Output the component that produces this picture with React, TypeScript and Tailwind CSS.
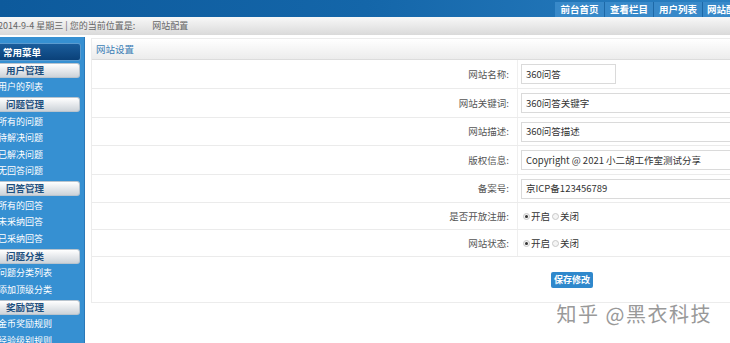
import React from 'react';

const font = { fontFamily: '"Noto Sans CJK SC", "Liberation Sans", sans-serif' };

type Group = { title: string; items: string[] };

const groups: Group[] = [
  { title: '用户管理', items: ['用户的列表'] },
  { title: '问题管理', items: ['所有的问题', '待解决问题', '已解决问题', '无回答问题'] },
  { title: '回答管理', items: ['所有的回答', '未采纳回答', '已采纳回答'] },
  { title: '问题分类', items: ['问题分类列表', '添加顶级分类'] },
  { title: '奖励管理', items: ['金币奖励规则', '经验级别规则'] },
];

const navTabs = ['前台首页', '查看栏目', '用户列表', '网站配置'];

type Field =
  | { label: string; kind: 'text'; value: string; h: string; short?: boolean }
  | { label: string; kind: 'radio'; h: string };

// row heights follow the screenshot's uneven grid
const fields: Field[] = [
  { label: '网站名称:', kind: 'text', value: '360问答', short: true, h: 'h-[29px]' },
  { label: '网站关键词:', kind: 'text', value: '360问答关键字', h: 'h-[29px]' },
  { label: '网站描述:', kind: 'text', value: '360问答描述', h: 'h-[28px]' },
  { label: '版权信息:', kind: 'text', value: 'Copyright @ 2021 小二胡工作室测试分享', h: 'h-[29px]' },
  { label: '备案号:', kind: 'text', value: '京ICP备123456789', h: 'h-[28px]' },
  { label: '是否开放注册:', kind: 'radio', h: 'h-[27px]' },
  { label: '网站状态:', kind: 'radio', h: 'h-[27px]' },
];

const Radio: React.FC<{ checked?: boolean }> = ({ checked }) => (
  <span className="inline-flex items-center justify-center w-[7px] h-[7px] rounded-full border border-[#c8c8c8] bg-[#f4f4f4] mr-[1px]">
    {checked && <span className="w-[3px] h-[3px] rounded-full bg-[#333]" />}
  </span>
);

const Sidebar: React.FC = () => (
  <div className="w-[85px] shrink-0 bg-[#3690d2] border-r border-[#2a78b8] overflow-hidden pt-[6px]">
    <div className="w-[81px] h-[18px] rounded-r-[3px] bg-gradient-to-b from-[#1a5d9c] to-[#0a4179] border border-[#5a9bd0] border-l-0 flex items-center pl-[3px] text-white font-bold text-[9.5px]">
      常用菜单
    </div>
    {groups.map((g) => (
      <div key={g.title}>
        <div className="w-[80px] h-[15px] mt-[1.5px] mb-[1.5px] rounded-r-[3px] bg-gradient-to-b from-[#ffffff] to-[#cdd3d9] border border-[#b9c4ce] border-l-0 flex items-center pl-[6px] text-[#1d4f7e] font-bold text-[9.5px]">
          {g.title}
        </div>
        {g.items.map((it) => (
          <div key={it} className="h-[16.5px] leading-[16.5px] text-white text-[9px] ml-[-2px] whitespace-nowrap">
            {it}
          </div>
        ))}
      </div>
    ))}
  </div>
);

const Panel: React.FC = () => (
  <div className="shrink-0 ml-[6px] mt-[1px] h-[265px] border border-[#ececec] border-r-0 overflow-hidden">
    <div className="h-[21px] bg-gradient-to-b from-[#ffffff] to-[#ececec] border-b border-[#dcdcdc] flex items-center pl-[4px] text-[#3a7db5] text-[9.5px]">
      网站设置
    </div>
    {fields.map((f) => (
      <div key={f.label} className={`${f.h} flex border-b border-[#ebebeb]`}>
        <div className="w-[426px] shrink-0 flex items-center justify-end pr-[8px] text-[#555] text-[9.5px] border-r border-[#efefef]">
          {f.label}
        </div>
        <div className="flex-1 flex items-center pl-[3px] text-[#333] text-[9.5px] whitespace-nowrap">
          {f.kind === 'text' ? (
            <div
              className={`h-[20px] border border-[#dadada] flex items-center pl-[4px] bg-white ${
                f.short ? 'w-[95px]' : 'w-[260px]'
              }`}
            >
              {f.value}
            </div>
          ) : (
            <div className="flex items-center pl-[2px]">
              <Radio checked />
              <span className="mr-[2px]">开启</span>
              <Radio />
              <span>关闭</span>
            </div>
          )}
        </div>
      </div>
    ))}
    <div className="h-[45px] flex items-center pl-[459px]">
      <button className="h-[16px] px-[3px] rounded-[2px] bg-[#2f88cc] text-white font-bold text-[9px] leading-none">
        保存修改
      </button>
    </div>
  </div>
);

export default function App() {
  return (
    <div className="w-[730px] h-[343px] overflow-hidden bg-white flex flex-col" style={font}>
      <div className="h-[17px] shrink-0 bg-gradient-to-r from-[#0d5a9c] via-[#1466a9] to-[#2a80c2] flex justify-end items-end">
        <div className="flex h-[15px]">
          {navTabs.map((t, i) => (
            <div
              key={t}
              className={`h-full flex items-center justify-center bg-[#3889c9] text-white font-bold text-[9.5px] whitespace-nowrap ${
                i > 0 ? 'border-l border-[#1d68a6]' : ''
              } ${i === 3 ? 'w-[28px] justify-start pl-[4px] overflow-hidden' : 'w-[49px]'}`}
            >
              {t}
            </div>
          ))}
        </div>
      </div>
      <div className="h-[18px] shrink-0 bg-gradient-to-b from-[#f8f8f8] to-[#dadada] flex items-center text-[#666] text-[9px] whitespace-nowrap">
        <span className="ml-[-2px]">2014-9-4 星期三 | 您的当前位置是:</span>
        <span className="ml-[17px]">网站配置</span>
      </div>
      <div className="h-[2px] shrink-0" />
      <div className="flex flex-1 min-h-0">
        <Sidebar />
        <div className="flex-1 flex flex-col min-w-0">
          <Panel />
          <div className="flex justify-end pr-[18px]">
            <span className="text-[20px] leading-[22px] text-[#999] tracking-[1.5px]">知乎 @黑衣科技</span>
          </div>
        </div>
      </div>
    </div>
  );
}
